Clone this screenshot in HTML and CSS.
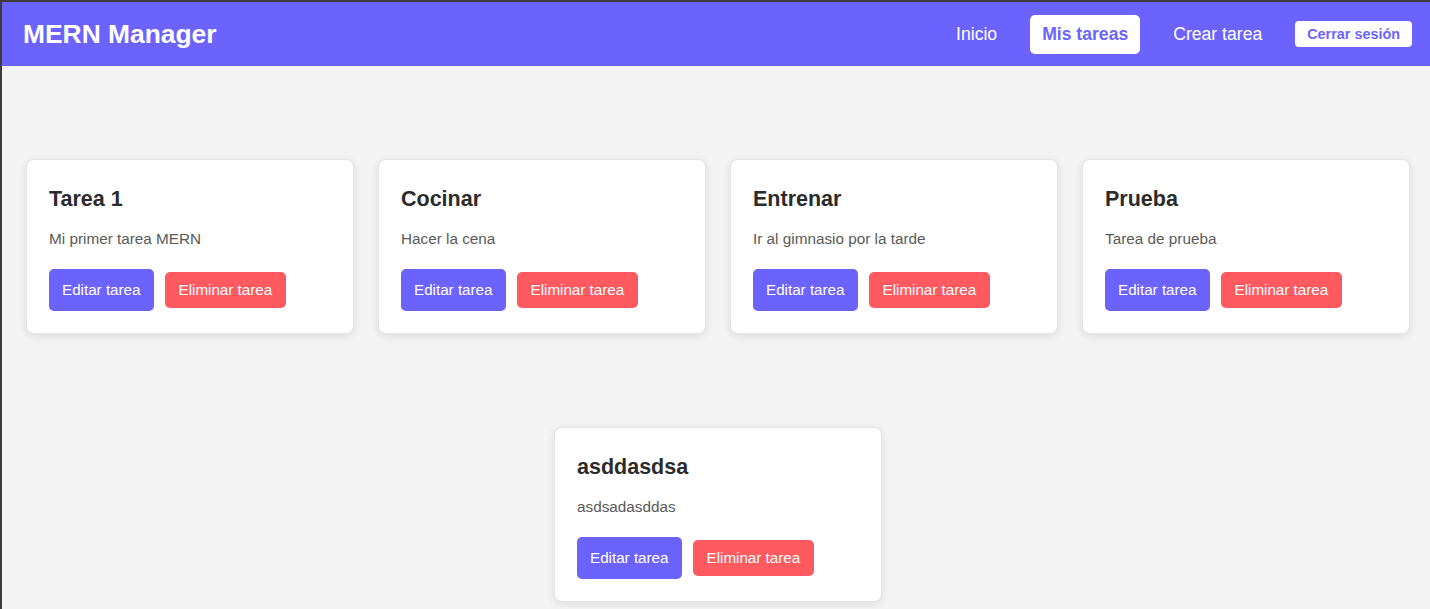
FILE: index.html
```html
<!DOCTYPE html>
<html lang="es">
<head>
<meta charset="utf-8">
<title>MERN Manager</title>
<link rel="stylesheet" href="styles.css">
</head>
<body>
<div class="frame">
  <header class="navbar">
    <h1 class="brand">MERN Manager</h1>
    <nav class="nav">
      <a class="nav-link" href="#">Inicio</a>
      <a class="nav-link active" href="#">Mis tareas</a>
      <a class="nav-link" href="#">Crear tarea</a>
      <button class="logout">Cerrar sesión</button>
    </nav>
  </header>
  <main class="tasks">
    <div class="card">
      <h3 class="card-title">Tarea 1</h3>
      <p class="card-desc">Mi primer tarea MERN</p>
      <div class="actions"><button class="btn edit">Editar tarea</button><button class="btn del">Eliminar tarea</button></div>
    </div>
    <div class="card">
      <h3 class="card-title">Cocinar</h3>
      <p class="card-desc">Hacer la cena</p>
      <div class="actions"><button class="btn edit">Editar tarea</button><button class="btn del">Eliminar tarea</button></div>
    </div>
    <div class="card">
      <h3 class="card-title">Entrenar</h3>
      <p class="card-desc">Ir al gimnasio por la tarde</p>
      <div class="actions"><button class="btn edit">Editar tarea</button><button class="btn del">Eliminar tarea</button></div>
    </div>
    <div class="card">
      <h3 class="card-title">Prueba</h3>
      <p class="card-desc">Tarea de prueba</p>
      <div class="actions"><button class="btn edit">Editar tarea</button><button class="btn del">Eliminar tarea</button></div>
    </div>
    <div class="card">
      <h3 class="card-title">asddasdsa</h3>
      <p class="card-desc">asdsadasddas</p>
      <div class="actions"><button class="btn edit">Editar tarea</button><button class="btn del">Eliminar tarea</button></div>
    </div>
  </main>
</div>
</body>
</html>
```
FILE: styles.css
```css
* { box-sizing: border-box; }
html, body { margin: 0; padding: 0; height: 100%; }
body {
  background: #3e3c38;
  font-family: "Liberation Sans", Arial, sans-serif;
  overflow: hidden;
}
.frame {
  margin: 2px 0 0 2px;
  height: calc(100% - 2px);
  background: #f4f4f4;
}
.navbar {
  height: 64px;
  background: #6c63ff;
  display: flex;
  align-items: center;
  justify-content: space-between;
  padding: 0 18px 0 21px;
}
.brand {
  margin: 0;
  color: #fff;
  font-size: 26.4px;
  font-weight: 700;
}
.nav {
  display: flex;
  align-items: center;
  gap: 21px;
}
.nav-link {
  color: #fff;
  text-decoration: none;
  font-size: 17.6px;
  padding: 9.5px 12px;
  border-radius: 5px;
  line-height: 20px;
}
.nav-link.active {
  background: #fff;
  color: #6c63ff;
  font-weight: 700;
}
.logout {
  background: #fff;
  color: #6c63ff;
  border: none;
  border-radius: 4px;
  font-family: inherit;
  font-weight: 700;
  font-size: 14.4px;
  line-height: 16px;
  padding: 5px 12px;
}
.tasks {
  display: flex;
  flex-wrap: wrap;
  justify-content: center;
  column-gap: 24px;
  row-gap: 93px;
  padding: 93px 16px 0 20px;
}
.card {
  flex: 0 0 328px;
  width: 328px;
  background: #fff;
  border-radius: 8px;
  padding: 22px;
  box-shadow: 0 2px 8px rgba(0, 0, 0, 0.1);
  border: 1px solid #e6e6e6;
}
.card-title {
  margin: 4px 0 0;
  font-size: 21.5px;
  line-height: 26px;
  color: #2b2b2b;
  font-weight: 700;
}
.card-desc {
  margin: 18px 0 0;
  font-size: 15.3px;
  line-height: 18px;
  color: #5a5a5a;
}
.actions {
  margin-top: 21px;
  display: flex;
  align-items: center;
  gap: 11px;
}
.btn {
  border: none;
  color: #fff;
  font-family: inherit;
  font-size: 15.2px;
  line-height: 18px;
  border-radius: 5px;
  cursor: pointer;
}
.edit {
  background: #6c63ff;
  padding: 12px 13px;
}
.del {
  background: #ff5a5f;
  padding: 9px 14px;
}
```
